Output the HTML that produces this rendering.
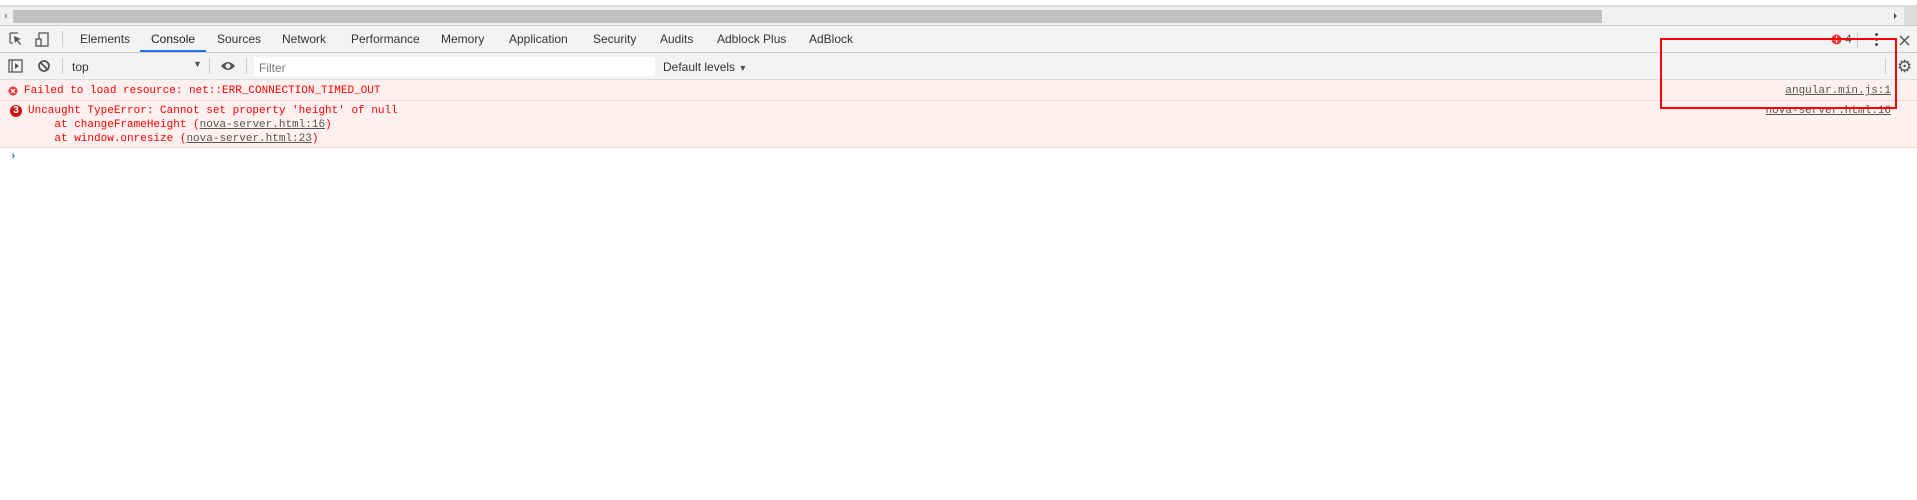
<!DOCTYPE html>
<html><head><style>
body{margin:0;width:1917px;height:500px;background:#fff;position:relative;overflow:hidden;font-family:"Liberation Sans",sans-serif;}
.a{position:absolute}
.tab{position:absolute;top:32px;font-size:12px;color:#333;}
.mono{font-family:"Liberation Mono",monospace;font-size:11px;line-height:14px;color:#f00;position:absolute;white-space:pre}
.lnk{color:#545454;text-decoration:underline}
</style></head><body>
<div class="a" style="left:0;top:5px;width:1917px;height:2px;background:#ddd"></div>
<div class="a" style="left:0;top:7px;width:1917px;height:18px;background:#f1f1f1"></div>
<div class="a" style="left:13px;top:10px;width:1589px;height:13px;background:#c1c1c1"></div>
<div class="a" style="left:4px;top:13px;width:0;height:0;border:3px solid transparent;border-right:3px solid #a3a3a3;border-left:0"></div>
<div class="a" style="left:1894px;top:13px;width:0;height:0;border:3px solid transparent;border-left:3px solid #505050;border-right:0"></div>
<div class="a" style="left:1904px;top:7px;width:13px;height:18px;background:#dcdcdc"></div>
<div class="a" style="left:0;top:25px;width:1917px;height:1px;background:#ccc"></div>
<div class="a" style="left:0;top:26px;width:1917px;height:26px;background:#f3f3f3"></div>
<svg class="a" style="left:8px;top:31px" width="46" height="16"><path d="M2 2h8M2 2v10M2 12h3" stroke="#555" fill="none" stroke-width="1.3"/><path d="M6 5l7 3-3 1 3 4-1 1-3-4-2 2z" fill="#555"/><rect x="31" y="2" width="9" height="13" fill="none" stroke="#555" stroke-width="1.3"/><rect x="28" y="8" width="5" height="7" fill="#f3f3f3" stroke="#555" stroke-width="1.3"/></svg>
<div class="a" style="left:62px;top:31px;width:1px;height:16px;background:#ccc"></div>
<div class="tab" style="left:80px">Elements</div>
<div class="tab" style="left:151px;color:#222">Console</div>
<div class="a" style="left:140px;top:50px;width:66px;height:2px;background:#1a73e8"></div>
<div class="tab" style="left:217px">Sources</div>
<div class="tab" style="left:282px">Network</div>
<div class="tab" style="left:351px">Performance</div>
<div class="tab" style="left:441px">Memory</div>
<div class="tab" style="left:509px">Application</div>
<div class="tab" style="left:593px">Security</div>
<div class="tab" style="left:660px">Audits</div>
<div class="tab" style="left:717px">Adblock Plus</div>
<div class="tab" style="left:809px">AdBlock</div>
<svg class="a" style="left:1831px;top:34px" width="11" height="11"><circle cx="5.5" cy="5.5" r="5" fill="#e33"/><path d="M5.5 2v7M2 5.5h7" stroke="#fff" stroke-width="1.2"/></svg>
<div class="tab" style="left:1845px;color:#555">4</div>
<div class="a" style="left:1857px;top:32px;width:1px;height:16px;background:#ccc"></div>
<div class="a" style="left:1875px;top:33px;width:3px;height:3px;border-radius:2px;background:#555;box-shadow:0 5px 0 #555,0 10px 0 #555"></div>
<svg class="a" style="left:1899px;top:35px" width="11" height="11"><path d="M1 1l9 9M10 1l-9 9" stroke="#555" stroke-width="1.5"/></svg>
<div class="a" style="left:0;top:52px;width:1917px;height:1px;background:#ccc"></div>
<div class="a" style="left:0;top:53px;width:1917px;height:26px;background:#f3f3f3"></div>
<svg class="a" style="left:8px;top:58px" width="50" height="16"><rect x="1" y="2" width="13" height="12" fill="none" stroke="#555" stroke-width="1.3"/><path d="M4 2v12" stroke="#555" stroke-width="1.3"/><path d="M7 5l4 3-4 3z" fill="#555"/><circle cx="36" cy="8" r="5" fill="none" stroke="#555" stroke-width="1.8"/><path d="M32.5 4.5l7 7" stroke="#555" stroke-width="1.8"/></svg>
<div class="a" style="left:62px;top:58px;width:1px;height:16px;background:#ccc"></div>
<div class="tab" style="left:72px;top:60px">top</div>
<div class="tab" style="left:193px;top:59px;font-size:9px;color:#555">▼</div>
<div class="a" style="left:209px;top:58px;width:1px;height:16px;background:#ccc"></div>
<svg class="a" style="left:220px;top:60px" width="16" height="12"><path d="M1 6Q8 -2 15 6Q8 14 1 6z" fill="#555"/><circle cx="8" cy="6" r="2.5" fill="#f3f3f3"/></svg>
<div class="a" style="left:246px;top:58px;width:1px;height:16px;background:#ccc"></div>
<div class="a" style="left:254px;top:57px;width:401px;height:19px;background:#fff"></div>
<div class="tab" style="left:259px;top:61px;color:#777">Filter</div>
<div class="tab" style="left:663px;top:60px">Default levels <span style="font-size:9px;color:#555">▼</span></div>
<div class="a" style="left:1885px;top:58px;width:1px;height:16px;background:#ccc"></div>
<div class="tab" style="left:1897px;top:57px;font-size:17px;color:#555">⚙</div>
<div class="a" style="left:0;top:79px;width:1917px;height:1px;background:#ddd"></div>
<div class="a" style="left:0;top:80px;width:1917px;height:20px;background:#fff0f0;border-bottom:1px solid #ffd6d6"></div>
<div class="a" style="left:0;top:101px;width:1917px;height:46px;background:#fff0f0;border-bottom:1px solid #ffd6d6"></div>
<svg class="a" style="left:8px;top:86px" width="10" height="10"><circle cx="5" cy="5" r="4.5" fill="#e33"/><path d="M3 3l4 4M7 3l-4 4" stroke="#fff" stroke-width="1.3"/></svg>
<div class="mono" style="left:24px;top:84px">Failed to load resource: net::ERR_CONNECTION_TIMED_OUT</div>
<div class="mono lnk" style="right:26px;top:84px">angular.min.js:1</div>
<div class="a" style="left:10px;top:105px;width:12px;height:12px;border-radius:6px;background:#c11;color:#fff;font-size:10px;font-weight:bold;text-align:center;line-height:12px">3</div>
<div class="mono" style="left:28px;top:104px">Uncaught TypeError: Cannot set property 'height' of null
    at changeFrameHeight (<span class="lnk">nova-server.html:16</span>)
    at window.onresize (<span class="lnk">nova-server.html:23</span>)</div>
<div class="mono lnk" style="right:26px;top:104px">nova-server.html:16</div>
<div class="mono" style="left:10px;top:150px;color:#1a73e8;font-weight:bold">›</div>
<div class="a" style="left:1660px;top:38px;width:233px;height:67px;border:2px solid #f00"></div>
</body></html>
